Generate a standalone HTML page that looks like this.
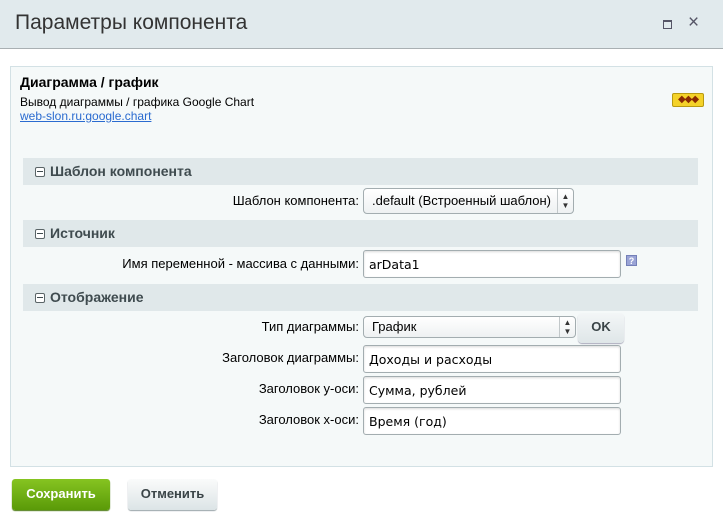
<!DOCTYPE html>
<html><head><meta charset="utf-8"><style>
*{margin:0;padding:0;box-sizing:border-box}
body{width:723px;height:523px;background:#fff;font-family:"Liberation Sans",sans-serif;position:relative;overflow:hidden;color:#000}
.a{position:absolute}
.hdr{left:0;top:0;width:723px;height:49px;background:#e1eaed;border-bottom:1px solid #a9b0b3}
.nar{display:inline-block;white-space:nowrap}
.narr{display:inline-block;white-space:nowrap}
.sec{left:23px;width:675px;height:27px;background:#e0e8ea;font-weight:bold;font-size:14px;color:#3f4b4f;line-height:27px;padding-left:12px}
.box{display:inline-block;width:10px;height:10px;border:1px solid #5a6467;border-radius:2px;position:relative;vertical-align:-1px;margin-right:5px;background:#fff}
.box:after{content:"";position:absolute;left:1px;top:3px;width:6px;height:1px;background:#3f4b4f}
.lbl{font-size:13px;right:364px;text-align:right;color:#000}
.inp{left:363px;width:258px;height:28px;background:#fff;border:1px solid #a3adb0;border-radius:3px;box-shadow:inset 0 1px 2px rgba(0,0,0,.15);font-family:"DejaVu Sans",sans-serif;font-size:12.5px;line-height:28px;padding-left:5px}
.sel{background:linear-gradient(#fff,#eef1f2);border:1px solid #a3adb0;border-radius:4px;font-size:13px;line-height:22px;padding-left:8px}
.arr{position:absolute;right:0;top:0;bottom:0;width:16px;border-left:1px solid #c2c8ca;font-size:8px;line-height:9px;text-align:center;padding-top:3px;color:#333}
</style></head><body>
<div class="a hdr"></div>
<div class="a" style="left:15px;top:11px;font-size:21px;color:#333">Параметры компонента</div>
<div class="a" style="left:663px;top:20px;width:9px;height:9px;border:1px solid #556;border-top-width:2px"></div>
<div class="a" style="left:688px;top:12px;font-size:19px;color:#556">×</div>

<div class="a" style="left:10px;top:66px;width:703px;height:401px;background:#f5f9f9;border:1px solid #d3e1e5"></div>
<div class="a" style="left:20px;top:74px;font-size:14px;font-weight:bold">Диаграмма / график</div>
<div class="a" style="left:20px;top:95px;font-size:12px">Вывод диаграммы / графика Google Chart</div>
<div class="a" style="left:20px;top:109px;font-size:12px;color:#2a6bd0;text-decoration:underline">web-slon.ru:google.chart</div>
<div class="a" style="left:672px;top:93px;width:32px;height:14px;background:#f4d229;border:1px solid #b89a10;border-radius:2px;font-size:10px;line-height:12px;text-align:center;color:#8a2a00;letter-spacing:-1px">◆◆◆</div>

<div class="a sec" style="top:158px"><span class="box"></span>Шаблон компонента</div>
<div class="a lbl" style="top:193px">Шаблон компонента:</div>
<div class="a sel" style="left:363px;top:188px;width:211px;height:26px;line-height:24px">.default (Встроенный шаблон)<span class="arr">▲<br>▼</span></div>

<div class="a sec" style="top:220px"><span class="box"></span>Источник</div>
<div class="a lbl" style="top:256px">Имя переменной - массива с данными:</div>
<div class="a inp" style="top:250px">arData1</div>
<div class="a" style="left:626px;top:255px;width:11px;height:11px;background:#9aa4d6;border:1px solid #7480b8;color:#fff;font-size:9px;font-weight:bold;line-height:10px;text-align:center">?</div>

<div class="a sec" style="top:284px"><span class="box"></span>Отображение</div>
<div class="a lbl" style="top:319px">Тип диаграммы:</div>
<div class="a sel" style="left:363px;top:316px;width:213px;height:22px;line-height:20px">График<span class="arr" style="padding-top:1px">▲<br>▼</span></div>
<div class="a" style="left:578px;top:313px;width:46px;height:30px;background:linear-gradient(#f3f6f7,#dfe6e8);border-radius:4px;box-shadow:0 1px 1px #aab;font-size:13px;font-weight:bold;color:#3a4447;text-align:center;line-height:28px">OK</div>

<div class="a lbl" style="top:350px">Заголовок диаграммы:</div>
<div class="a inp" style="top:345px">Доходы и расходы</div>
<div class="a lbl" style="top:381px">Заголовок y-оси:</div>
<div class="a inp" style="top:376px">Сумма, рублей</div>
<div class="a lbl" style="top:412px">Заголовок x-оси:</div>
<div class="a inp" style="top:407px">Время (год)</div>

<div class="a" style="left:12px;top:479px;width:98px;height:31px;background:linear-gradient(#86c421,#5a9a08);border-radius:3px;box-shadow:0 1px 1px #4a7a10;color:#fff;font-weight:bold;font-size:13px;text-align:center;line-height:30px">Сохранить</div>
<div class="a" style="left:128px;top:479px;width:89px;height:31px;background:linear-gradient(#fafbfb,#dce4e6);border-radius:3px;box-shadow:0 1px 1px #99a4a8;color:#3a4447;font-weight:bold;font-size:13px;text-align:center;line-height:30px">Отменить</div>
</body></html>
